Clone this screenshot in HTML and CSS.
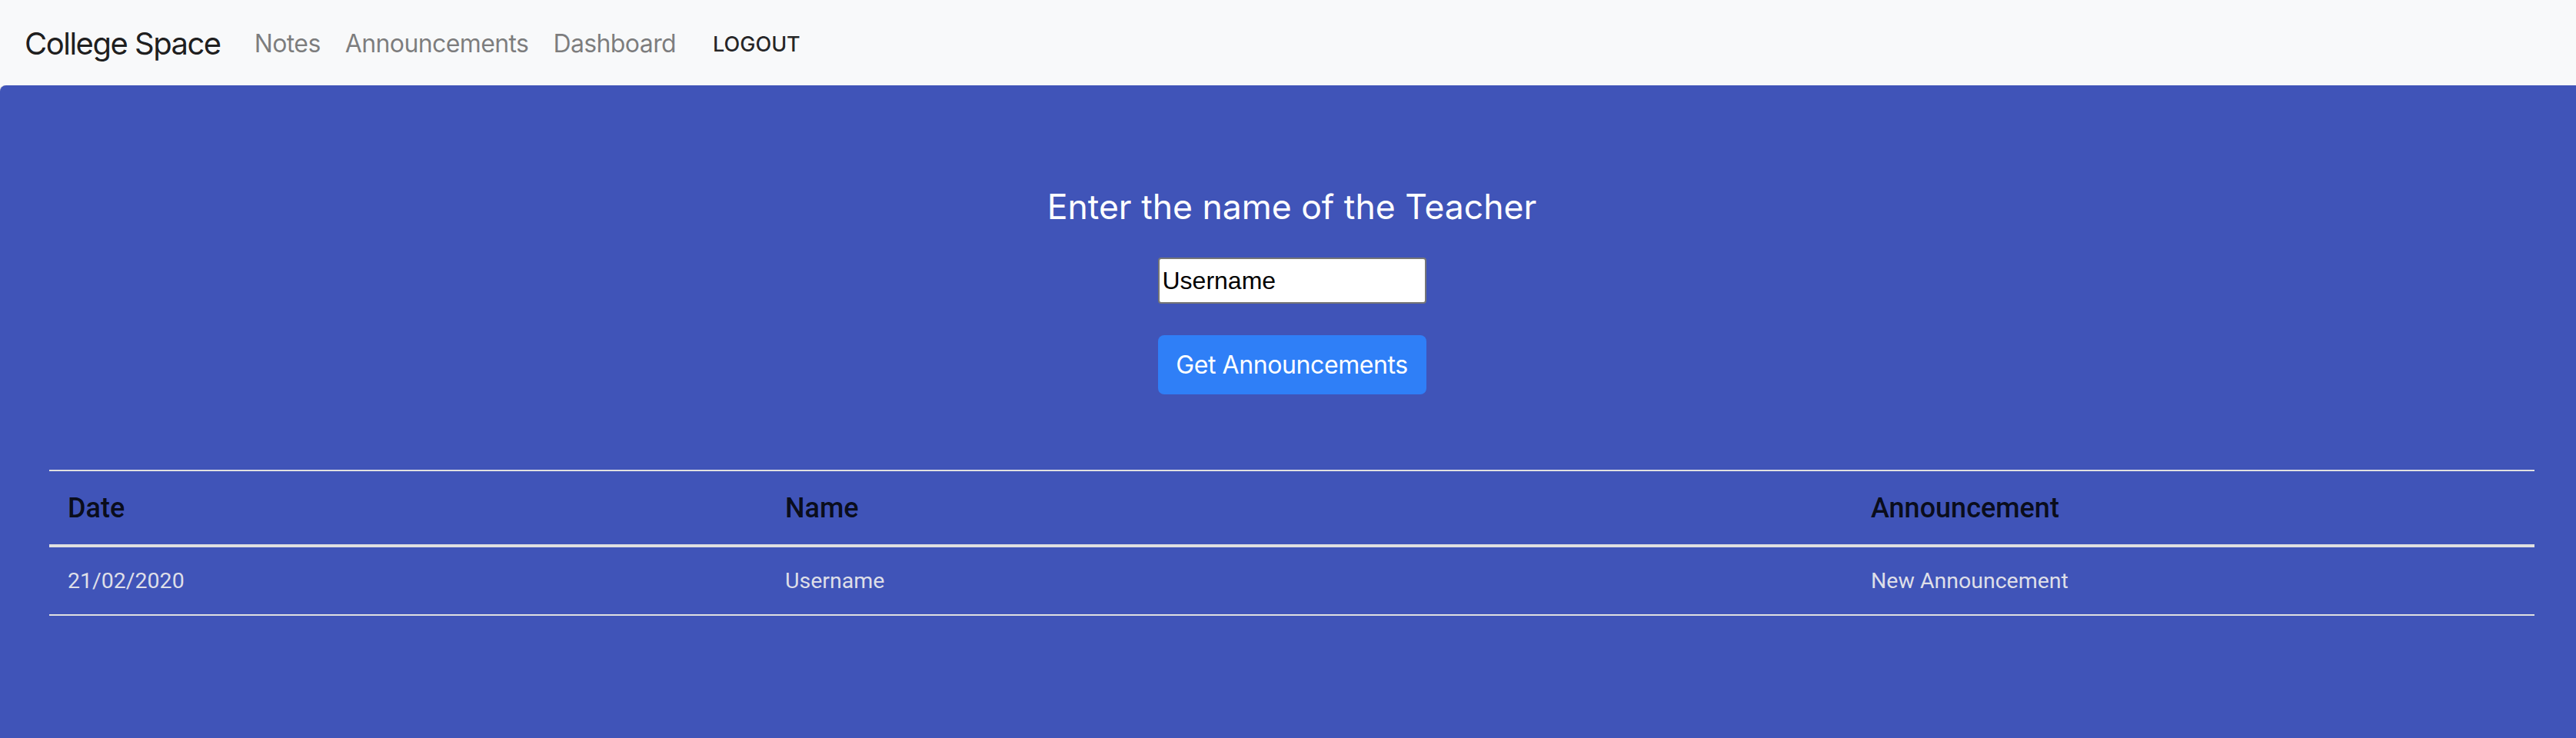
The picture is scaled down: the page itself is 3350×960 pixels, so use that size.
FILE: index.html
```html
<!DOCTYPE html>
<html lang="en">
<head>
<meta charset="utf-8">
<title>College Space</title>
<link rel="stylesheet" href="styles.css">
</head>
<body>
<nav class="navbar">
  <a class="brand" href="#">College Space</a>
  <ul class="nav">
    <li><a class="nav-link" href="#">Notes</a></li>
    <li><a class="nav-link" href="#">Announcements</a></li>
    <li><a class="nav-link" href="#">Dashboard</a></li>
    <li><button class="logout" type="button">Logout</button></li>
  </ul>
</nav>
<main class="panel">
  <form class="search">
    <h4 class="title">Enter the name of the Teacher</h4>
    <input class="field" type="text" value="Username">
    <button class="btn-primary" type="button">Get Announcements</button>
  </form>
  <table class="table">
    <colgroup>
      <col class="col-date">
      <col class="col-name">
      <col class="col-text">
    </colgroup>
    <thead>
      <tr class="head-row">
        <th>Date</th>
        <th>Name</th>
        <th>Announcement</th>
      </tr>
    </thead>
    <tbody>
      <tr class="body-row">
        <td>21/02/2020</td>
        <td>Username</td>
        <td>New Announcement</td>
      </tr>
    </tbody>
  </table>
</main>
</body>
</html>
```
FILE: styles.css
```css
* {
  box-sizing: border-box;
}

html, body {
  margin: 0;
  padding: 0;
  background: #f8f9fa;
  overflow: hidden;
}

body {
  font-family: Inter, "Liberation Sans", sans-serif;
}

.navbar {
  display: flex;
  align-items: center;
  height: 111px;
  padding: 3px 32px 0;
  background: #f8f9fa;
}

.brand {
  font-size: 40px;
  line-height: 60px;
  letter-spacing: -1.5px;
  color: rgba(0, 0, 0, 0.9);
  text-decoration: none;
  margin-right: 28px;
}

.nav {
  display: flex;
  align-items: center;
  list-style: none;
  margin: 0;
  padding: 0;
}

.nav-link {
  display: block;
  padding: 0 16px;
  font-size: 32px;
  line-height: 48px;
  letter-spacing: -0.6px;
  color: rgba(0, 0, 0, 0.5);
  text-decoration: none;
}

.logout {
  margin-left: 16px;
  padding: 0 16px;
  border: 0;
  background: transparent;
  font-family: Inter, "Liberation Sans", sans-serif;
  font-size: 27px;
  font-weight: 500;
  line-height: 49px;
  letter-spacing: 0;
  text-transform: uppercase;
  color: rgba(0, 0, 0, 0.87);
}

.panel {
  min-height: 849px;
  padding: 132px 54px 0 64px;
  background: #4054b8;
  border-top-left-radius: 8px;
  box-shadow: -1px 0 1px rgba(0, 0, 0, 0.15);
}

.search {
  display: flex;
  flex-direction: column;
  align-items: center;
}

.title {
  margin: 0;
  font-size: 44.5px;
  font-weight: 400;
  line-height: 53px;
  color: #ffffff;
}

.field {
  margin-top: 39px;
  width: 349px;
  height: 60px;
  padding: 0 4px;
  border: 2px solid #767676;
  border-radius: 4px;
  background: #ffffff;
  color: #000000;
  font-family: "Liberation Sans", Arial, sans-serif;
  font-size: 32px;
}

.btn-primary {
  margin-top: 41px;
  width: 349px;
  height: 77px;
  border: 0;
  border-radius: 8px;
  background: #2f7ff7;
  color: #ffffff;
  font-family: Inter, "Liberation Sans", sans-serif;
  font-size: 32px;
  line-height: 48px;
  letter-spacing: -0.4px;
}

.table {
  margin-top: 98px;
  width: 100%;
  border-collapse: collapse;
  table-layout: fixed;
  font-family: Roboto, "Liberation Sans", sans-serif;
}

.col-date { width: 933px; }
.col-name { width: 1412px; }
.col-text { width: 887px; }

.head-row {
  border-top: 2px solid #e0e0e0;
  border-bottom: 4px solid #e0e0e0;
}

.head-row th {
  height: 98px;
  padding: 0 0 0 24px;
  text-align: left;
  font-size: 36px;
  font-weight: 500;
  color: rgba(0, 0, 0, 0.87);
}

.body-row {
  border-bottom: 2px solid #e0e0e0;
}

.body-row td {
  height: 90px;
  padding: 0 0 0 24px;
  font-size: 28.5px;
  font-weight: 400;
  color: #dedfe8;
}
```
